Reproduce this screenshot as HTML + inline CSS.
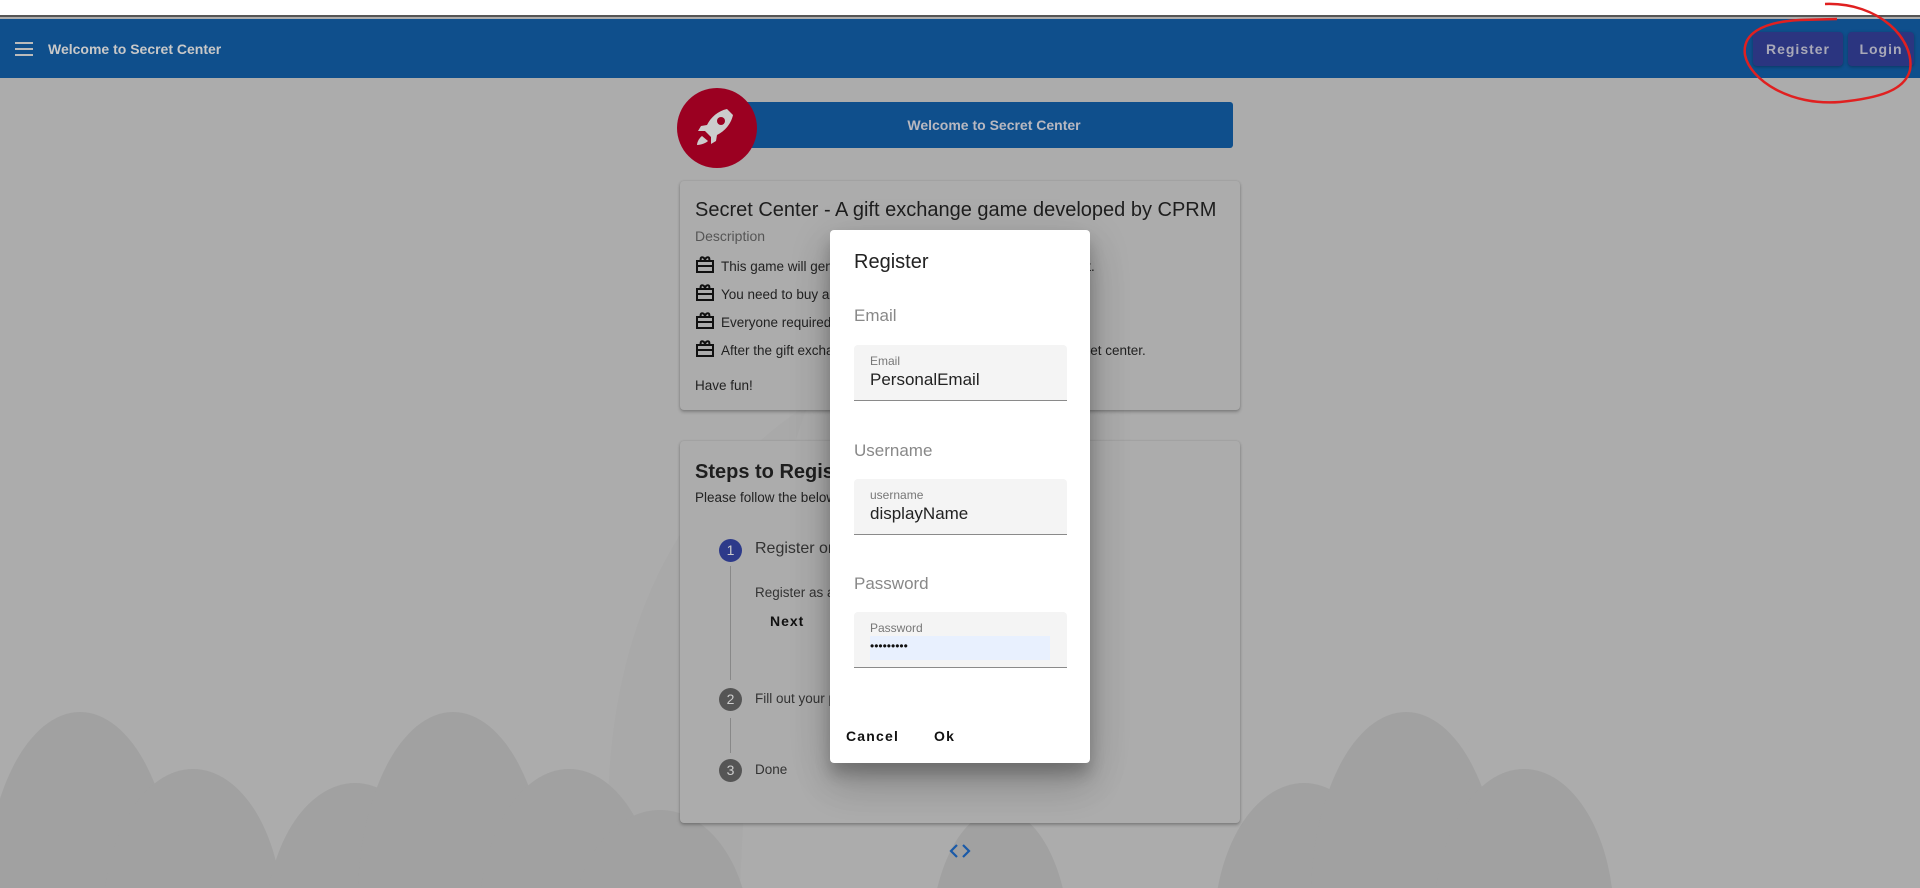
<!DOCTYPE html>
<html><head><meta charset="utf-8"><style>
*{box-sizing:border-box;margin:0;padding:0}
html{overflow:hidden;width:1920px;height:888px}
body{width:1920px;height:888px;overflow:hidden;background:#acacac;font-family:"Liberation Sans",sans-serif;position:relative}
.abs{position:absolute}
.card{position:absolute;background:#acacac;border-radius:4px;box-shadow:0 2px 3px rgba(0,0,0,.25),0 0 2px rgba(0,0,0,.12)}
.t{position:absolute;white-space:nowrap}
.gift{display:inline-block;width:20px;height:18px;vertical-align:-2px;margin-right:6px}
.step{position:absolute;width:23px;height:23px;border-radius:50%;color:#ccc;font-size:14px;text-align:center;line-height:23px}
.field{position:absolute;left:24px;width:213px;height:56px;background:#f4f4f4;border-radius:4px 4px 0 0;border-bottom:1.5px solid #8a8a8a}
.fl{position:absolute;left:16px;top:9px;font-size:12px;color:#777}
.fv{position:absolute;left:16px;top:25px;font-size:17px;color:#222}
.sec{position:absolute;left:24px;font-size:17px;color:#888}
</style></head><body>
<div class="abs" style="left:0;top:0;width:1920px;height:17px;background:#fff;border-bottom:2px solid #555"></div>
<svg class="abs" style="left:0;top:0" width="1920" height="888">
<path d="M610 888 C590 600 700 420 960 330 L1010 260 L930 250 C820 330 760 420 740 888Z" fill="#a9a9a9"/>
<g fill="#a1a1a1">
<ellipse cx="80" cy="900" rx="95" ry="188"/><ellipse cx="193" cy="920" rx="90" ry="151"/>
<ellipse cx="355" cy="930" rx="90" ry="147"/><ellipse cx="453" cy="900" rx="95" ry="188"/>
<ellipse cx="569" cy="920" rx="90" ry="151"/><ellipse cx="660" cy="940" rx="90" ry="130"/>
<ellipse cx="1304" cy="930" rx="90" ry="147"/><ellipse cx="1406" cy="900" rx="95" ry="188"/>
<ellipse cx="1524" cy="920" rx="90" ry="151"/><ellipse cx="1000" cy="950" rx="70" ry="140"/>
</g></svg>
<div class="abs" style="left:0;top:19px;width:1920px;height:59px;background:#0f4f8c"></div>
<div class="abs" style="left:15px;top:42px;width:18px;height:2px;background:#bbb;box-shadow:0 6px 0 #bbb,0 12px 0 #bbb"></div>
<div class="t" style="left:48px;top:41px;font-size:14px;font-weight:bold;color:#c8c8c8">Welcome to Secret Center</div>
<div class="abs" style="left:1753px;top:32px;width:90px;height:34px;background:#2b3580;border-radius:4px;box-shadow:0 1px 3px rgba(0,0,0,.3);color:#a9a9b8;font-size:14px;font-weight:bold;letter-spacing:1px;text-align:center;line-height:34px">Register</div>
<div class="abs" style="left:1848px;top:32px;width:66px;height:34px;background:#2b3580;border-radius:4px;box-shadow:0 1px 3px rgba(0,0,0,.3);color:#a9a9b8;font-size:14px;font-weight:bold;letter-spacing:1px;text-align:center;line-height:34px">Login</div>
<svg class="abs" style="left:0;top:0;z-index:5" width="1920" height="888"><path d="M1825 4 C1880 2 1915 40 1910 70 C1905 90 1880 98 1840 102 C1790 106 1750 80 1745 55 C1742 35 1760 22 1800 20 L1837 19" fill="none" stroke="#e02020" stroke-width="2.5"/></svg>
<div class="abs" style="left:735px;top:102px;width:498px;height:46px;background:#0f4f8c;border-radius:3px;color:#b8b8c0;font-size:14px;font-weight:bold;text-align:center;line-height:46px;padding-left:20px">Welcome to Secret Center</div>
<div class="abs" style="left:677px;top:88px;width:80px;height:80px;border-radius:50%;background:#9b0021"></div>
<svg class="abs" style="left:692px;top:105px" width="46" height="46" viewBox="0 0 46 46"><path d="M35 4 C26 6 19 12 15 20 L9 21 L6 26 L13 26 L19 32 L19 39 L24 36 L25 30 C33 26 39 19 41 10 Z" fill="#ccc"/><circle cx="29" cy="16" r="4" fill="#9b0021"/><path d="M10 31 C5 35 5 40 5 40 C9 40 14 38 16 36Z" fill="#ccc"/></svg>
<div class="card" style="left:680px;top:181px;width:560px;height:229px">
<div class="t" style="left:15px;top:18px;font-size:20px;color:#1e1e1e">Secret Center - A gift exchange game developed by CPRM</div>
<div class="t" style="left:15px;top:47px;font-size:14px;color:#555">Description</div>
<div class="t" style="left:15px;top:72px;font-size:13.5px;color:#222;line-height:28px">
<div><svg class="gift" viewBox="0 0 20 18"><path d="M2 6h16v11H2zM2 11h16M6 6c-2-5 4-5 4 0c0-5 6-5 4 0" fill="none" stroke="#111" stroke-width="2"/></svg>This game will generate a random person for you to give a gift.</div>
<div><svg class="gift" viewBox="0 0 20 18"><path d="M2 6h16v11H2zM2 11h16M6 6c-2-5 4-5 4 0c0-5 6-5 4 0" fill="none" stroke="#111" stroke-width="2"/></svg>You need to buy a gift for that person.</div>
<div><svg class="gift" viewBox="0 0 20 18"><path d="M2 6h16v11H2zM2 11h16M6 6c-2-5 4-5 4 0c0-5 6-5 4 0" fill="none" stroke="#111" stroke-width="2"/></svg>Everyone required to bring the gift.</div>
<div><svg class="gift" viewBox="0 0 20 18"><path d="M2 6h16v11H2zM2 11h16M6 6c-2-5 4-5 4 0c0-5 6-5 4 0" fill="none" stroke="#111" stroke-width="2"/></svg>After the gift exchange, the person will be revealed in the secret center.</div>
</div>
<div class="t" style="left:15px;top:197px;font-size:13.5px;color:#222">Have fun!</div>
</div>
<div class="card" style="left:680px;top:441px;width:560px;height:382px">
<div class="t" style="left:15px;top:20px;font-size:20px;color:#1e1e1e;font-weight:bold">Steps to Register</div>
<div class="t" style="left:15px;top:49px;font-size:13.5px;color:#222">Please follow the below steps</div>
<div class="step" style="left:39px;top:98px;background:#2d3a8a">1</div>
<div class="t" style="left:75px;top:99px;font-size:16px;color:#333">Register on Secret Center</div>
<div class="abs" style="left:50px;top:125px;width:1px;height:114px;background:#888"></div>
<div class="t" style="left:75px;top:144px;font-size:13.5px;color:#333">Register as a user</div>
<div class="t" style="left:90px;top:172px;font-size:14px;font-weight:bold;letter-spacing:1px;color:#111">Next</div>
<div class="step" style="left:39px;top:247px;background:#555">2</div>
<div class="t" style="left:75px;top:250px;font-size:13.5px;color:#333">Fill out your profile</div>
<div class="abs" style="left:50px;top:277px;width:1px;height:35px;background:#888"></div>
<div class="step" style="left:39px;top:318px;background:#555">3</div>
<div class="t" style="left:75px;top:321px;font-size:13.5px;color:#333">Done</div>
</div>
<svg class="abs" style="left:949px;top:843px" width="22" height="16" viewBox="0 0 22 16"><path d="M8 2 L2 8 L8 14 M14 2 L20 8 L14 14" fill="none" stroke="#1a5aa8" stroke-width="2.2"/></svg>
<div class="abs" style="left:830px;top:230px;width:260px;height:533px;background:#fff;border-radius:4px;box-shadow:0 11px 15px rgba(0,0,0,.2),0 24px 38px rgba(0,0,0,.14),0 9px 46px rgba(0,0,0,.12)">
<div class="t" style="left:24px;top:21px;font-size:20px;color:#222">Register</div>
<div class="sec" style="top:76px">Email</div>
<div class="field" style="top:115px"><div class="fl">Email</div><div class="fv">PersonalEmail</div></div>
<div class="sec" style="top:211px">Username</div>
<div class="field" style="top:249px"><div class="fl">username</div><div class="fv">displayName</div></div>
<div class="sec" style="top:344px">Password</div>
<div class="field" style="top:382px"><div class="fl">Password</div><div class="abs" style="left:16px;top:24px;width:180px;height:24px;background:#e8f0fe;font-size:12px;line-height:20px;color:#111">•••••••••</div></div>
<div class="t" style="left:16px;top:498px;font-size:14px;font-weight:bold;letter-spacing:1.2px;color:#111">Cancel</div>
<div class="t" style="left:104px;top:498px;font-size:14px;font-weight:bold;letter-spacing:1.2px;color:#111">Ok</div>
</div>
</body></html>
